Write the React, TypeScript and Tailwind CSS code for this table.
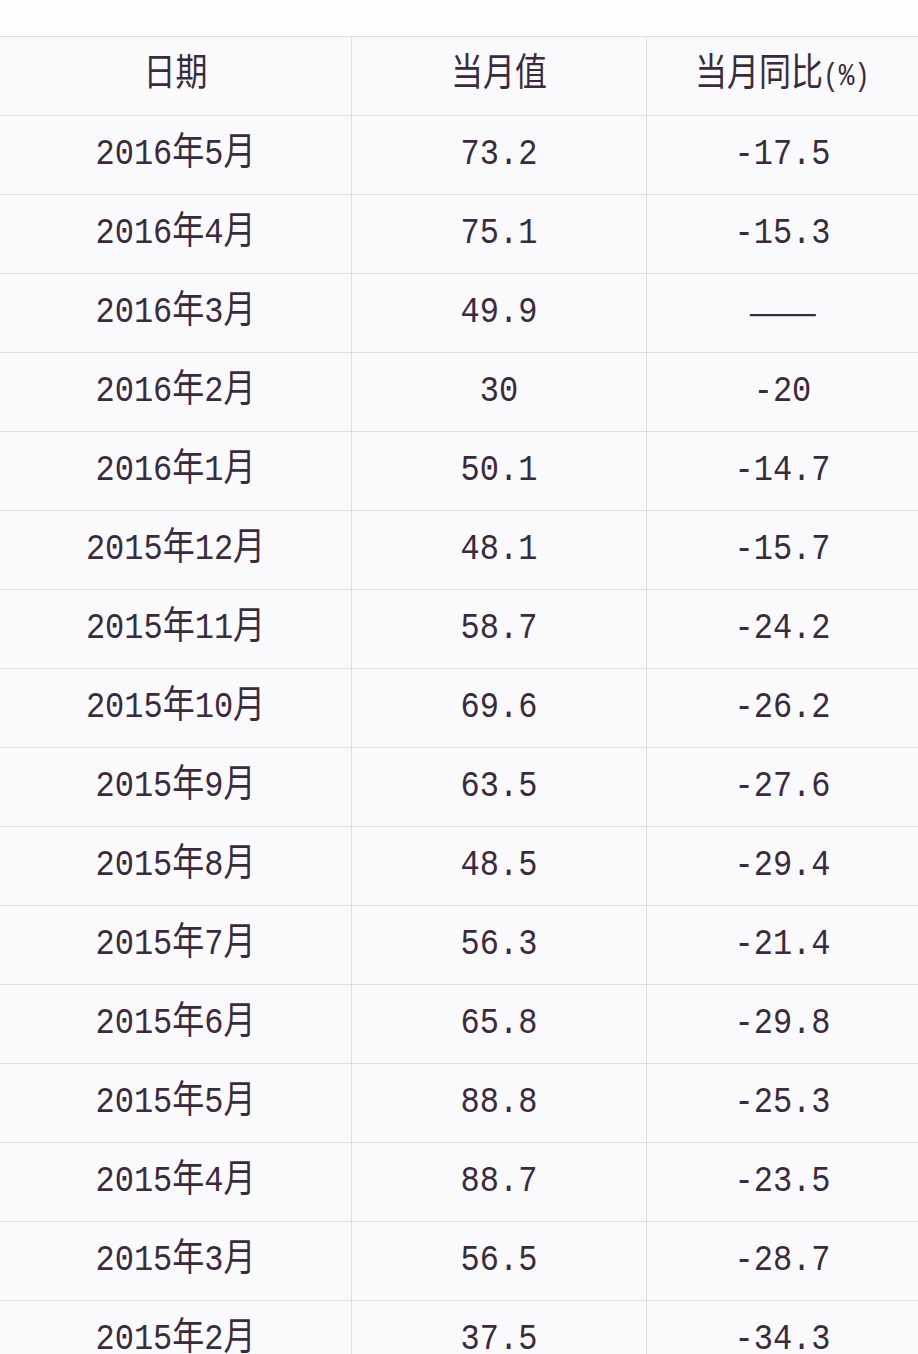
const rows: [string, string, string][] = [
  ["2016年5月", "73.2", "-17.5"],
  ["2016年4月", "75.1", "-15.3"],
  ["2016年3月", "49.9", "——"],
  ["2016年2月", "30", "-20"],
  ["2016年1月", "50.1", "-14.7"],
  ["2015年12月", "48.1", "-15.7"],
  ["2015年11月", "58.7", "-24.2"],
  ["2015年10月", "69.6", "-26.2"],
  ["2015年9月", "63.5", "-27.6"],
  ["2015年8月", "48.5", "-29.4"],
  ["2015年7月", "56.3", "-21.4"],
  ["2015年6月", "65.8", "-29.8"],
  ["2015年5月", "88.8", "-25.3"],
  ["2015年4月", "88.7", "-23.5"],
  ["2015年3月", "56.5", "-28.7"],
  ["2015年2月", "37.5", "-34.3"],
];

function Cell({ children, last }: { children: React.ReactNode; last?: boolean }) {
  return (
    <div
      className={
        "flex h-[79px] items-center justify-center border-b border-[#dcdfe0] " +
        (last ? "" : "border-r")
      }
    >
      <span className="inline-block scale-y-[1.18]">{children}</span>
    </div>
  );
}

export default function App() {
  return (
    <div
      className="h-[1354px] w-[918px] overflow-hidden bg-[#fdfdfe] text-[32px] text-[#3a2a3e]"
      style={{ fontFamily: '"Liberation Mono", "Noto Sans CJK SC", monospace' }}
    >
      <div className="h-[36px]" />
      <div className="grid grid-cols-[352px_295px_271px] border-t border-[#dcdfe0] bg-[#fafafc]">
        <Cell>日期</Cell>
        <Cell>当月值</Cell>
        <Cell last>
          当月同比<span className="text-[26px]">(%)</span>
        </Cell>
        {rows.map(([d, v, p]) => (
          <>
            <Cell key={d + "a"}>{d}</Cell>
            <Cell key={d + "b"}>{v}</Cell>
            <Cell key={d + "c"} last>
              {p === "——" ? (
                <span className="inline-block scale-x-[1.3] font-['Noto_Sans_CJK_SC',sans-serif]">{p}</span>
              ) : (
                p
              )}
            </Cell>
          </>
        ))}
      </div>
    </div>
  );
}
